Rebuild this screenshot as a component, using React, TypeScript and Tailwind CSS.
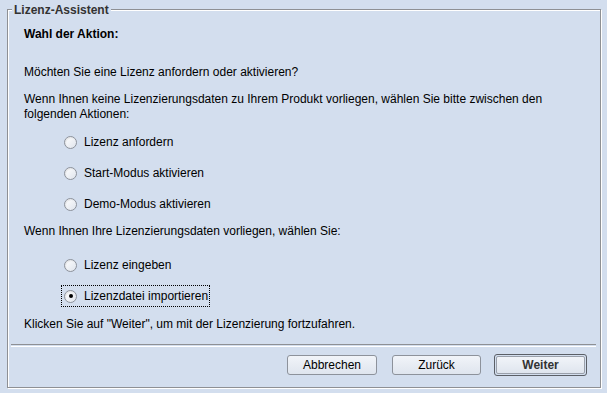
import React, { useState } from "react";

type Option = { id: string; label: string };

const requestOptions: Option[] = [
  { id: "request", label: "Lizenz anfordern" },
  { id: "start", label: "Start-Modus aktivieren" },
  { id: "demo", label: "Demo-Modus aktivieren" },
];

const haveOptions: Option[] = [
  { id: "enter", label: "Lizenz eingeben" },
  { id: "import", label: "Lizenzdatei importieren" },
];

const RadioRow: React.FC<{
  option: Option;
  checked: boolean;
  onSelect: (id: string) => void;
}> = ({ option, checked, onSelect }) => (
  <button
    type="button"
    onClick={() => onSelect(option.id)}
    className={`ml-[37px] flex h-[22px] items-center self-start pl-[3px] pr-[2px] text-left ${
      checked ? "outline-1 outline-dotted outline-black -outline-offset-1" : ""
    }`}
  >
    <span className="flex h-[13px] w-[13px] items-center justify-center rounded-full border border-[#8d929b] bg-gradient-to-br from-white to-[#dfe4ec] shadow-[inset_1px_1px_1px_rgba(0,0,0,0.08)]">
      {checked && <span className="h-[4px] w-[4px] rounded-full bg-black" />}
    </span>
    <span className="ml-[7px] leading-[15px] text-black">{option.label}</span>
  </button>
);

const DialogButton: React.FC<{
  label: string;
  primary?: boolean;
  className?: string;
}> = ({ label, primary, className }) =>
  primary ? (
    <button
      type="button"
      className={`h-[22px] rounded-[3px] border border-[#5b5f66] p-[1px] ${className ?? ""}`}
    >
      <span className="flex h-full w-full items-center justify-center rounded-[2px] border border-[#9aa0aa] bg-gradient-to-b from-[#f1f4f9] to-[#dfe5ee] font-bold text-[#333]">
        {label}
      </span>
    </button>
  ) : (
    <button
      type="button"
      className={`flex h-[20px] items-center justify-center rounded-[3px] border border-[#8d929b] bg-gradient-to-b from-[#f1f4f9] to-[#dfe5ee] text-black ${className ?? ""}`}
    >
      {label}
    </button>
  );

export default function App() {
  const [selected, setSelected] = useState("import");

  return (
    <div
      className="h-[393px] w-[607px] bg-[#d3deee] pb-[5px] pl-[7px] pr-[6px] pt-[9px] text-[12px] leading-[15px] text-black"
      style={{ fontFamily: '"Liberation Sans", Arial, sans-serif' }}
    >
      <div className="relative flex h-[379px] w-[594px] flex-col border border-[#8e9094] shadow-[inset_1px_1px_0_#ffffff,1px_1px_0_#ffffff]">
        <span className="absolute left-[4px] top-[-7px] bg-[#d3deee] px-[2px] font-bold text-[#333]">
          Lizenz-Assistent
        </span>

        <div className="flex flex-col pl-[16px] pt-[17px]">
          <div className="font-bold">Wahl der Aktion:</div>

          <p className="mt-[23px]">Möchten Sie eine Lizenz anfordern oder aktivieren?</p>

          <p className="mt-[12px]">
            Wenn Ihnen keine Lizenzierungsdaten zu Ihrem Produkt vorliegen, wählen Sie bitte zwischen den
            <br />
            folgenden Aktionen:
          </p>

          <div className="mt-[9px] flex flex-col gap-[9px]">
            {requestOptions.map((o) => (
              <RadioRow key={o.id} option={o} checked={selected === o.id} onSelect={setSelected} />
            ))}
          </div>

          <p className="mt-[9px]">Wenn Ihnen Ihre Lizenzierungsdaten vorliegen, wählen Sie:</p>

          <div className="mt-[15px] flex flex-col gap-[9px]">
            {haveOptions.map((o) => (
              <RadioRow key={o.id} option={o} checked={selected === o.id} onSelect={setSelected} />
            ))}
          </div>

          <p className="mt-[10px]">Klicken Sie auf "Weiter", um mit der Lizenzierung fortzufahren.</p>
        </div>

        <div className="mx-[3px] mr-[4px] mt-[12px] h-[2px] border-t border-[#8e9094] bg-transparent shadow-[0_1px_0_#ffffff]" />

        <div className="mt-[8px] flex items-center justify-end pr-[13px]">
          <DialogButton label="Abbrechen" className="w-[90px]" />
          <DialogButton label="Zurück" className="ml-[15px] w-[89px]" />
          <DialogButton label="Weiter" primary className="ml-[13px] w-[93px]" />
        </div>
      </div>
    </div>
  );
}
